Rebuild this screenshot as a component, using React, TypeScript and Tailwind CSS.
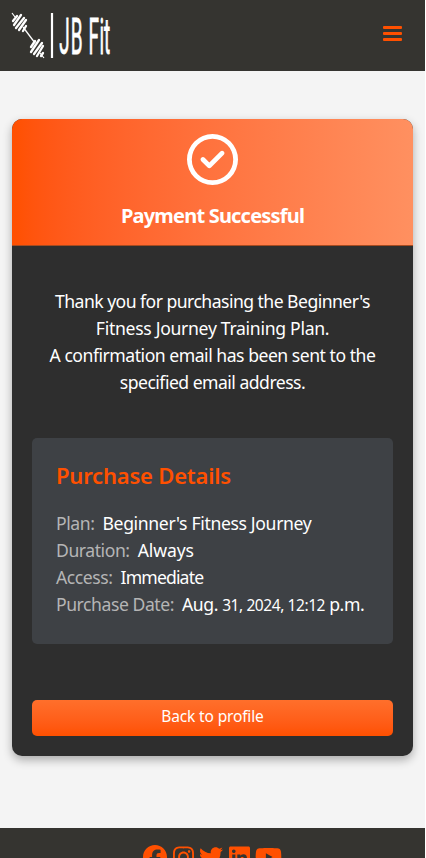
import type { ReactNode } from "react";
import { FaFacebook, FaInstagram, FaLinkedin, FaRegCircleCheck, FaTwitter, FaYoutube } from "react-icons/fa6";

function Logo() {
  return (
    <svg className="overflow-visible" width="102" height="48" viewBox="0 0 102 48" fill="none" stroke="#fff" aria-label="JB Fit">
      <path d="M12 15 24 31" strokeWidth="1.3" />
      <g strokeWidth="2.3" strokeLinecap="round">
        <path d="M2 9 6 4M3 13 10 3M5 16 13 6M8 18 15 8M12 19 15 14" />
        <path d="M20 35 24 29M20 40 28 28M23 42 31 31M26 44 32 34M30 44 32 41" />
      </g>
      <path d="M1 1 4 5M29 41 33 46" strokeWidth="1.2" />
      <path d="M41 1V46" strokeWidth="2.2" />
      <text
        transform="scale(0.38 1)"
        x="127 157 182 204 233 245"
        y="41.5"
        fill="#fff"
        strokeWidth="0.8"
        fontFamily="Roboto, sans-serif"
        fontSize="50"
        fontWeight="400"
      >
        JB Fit
      </text>
    </svg>
  );
}

function MenuIcon() {
  return (
    <svg width="19" height="15" fill="#ff5000" aria-label="Menu">
      <rect width="19" height="3" rx="1" />
      <rect y="6" width="19" height="3" rx="1" />
      <rect y="12" width="19" height="3" rx="1" />
    </svg>
  );
}

function Detail({ label, value, tracking }: { label: string; value: ReactNode; tracking: string }) {
  return (
    <p className="whitespace-nowrap">
      <span className="mr-[3.5px] tracking-[-0.45px] text-[#b5b5b5]">{label}:</span> <span className={tracking}>{value}</span>
    </p>
  );
}

export default function App() {
  return (
    <div className="flex h-[858px] w-[425px] flex-col overflow-hidden bg-[#f4f4f4] font-['Noto_Sans',sans-serif] text-white">
      <header className="flex h-[71px] shrink-0 items-center justify-between bg-[#353430] pr-[23px] pl-[11px]">
        <Logo />
        <div className="mb-1">
          <MenuIcon />
        </div>
      </header>

      <main className="px-3 pt-12 pb-[72px]">
        <section className="h-[637px] overflow-hidden rounded-[10px] bg-[#2e2e2e] shadow-[0_4px_10px_rgba(0,0,0,0.3)]">
          <div className="flex h-[127px] flex-col items-center border-b border-[#a64b20] bg-linear-to-r from-[#ff5000] to-[#ff9060] pt-[15px]">
            <FaRegCircleCheck className="size-[51px]" />
            <h1 className="mt-[17px] text-[20px] leading-[28px] font-bold tracking-[-0.8px] whitespace-nowrap">Payment Successful</h1>
          </div>

          <div className="px-5">
            <div className="pt-[42px] text-center text-[17.6px] leading-[27px] whitespace-nowrap">
              <p className="tracking-[-0.54px]">Thank you for purchasing the Beginner's</p>
              <p className="tracking-[-0.3px]">Fitness Journey Training Plan.</p>
              <p className="tracking-[-0.48px]">A confirmation email has been sent to the</p>
              <p className="tracking-[-0.52px]">specified email address.</p>
            </div>

            <div className="mt-[42px] h-[206px] rounded-[5px] bg-[#3e4145] px-6 pt-5 text-[17.6px] leading-[27px]">
              <h2 className="mb-[18px] text-[22px] leading-[34px] font-semibold tracking-[-0.2px] text-[#ff5000]">Purchase Details</h2>
              <Detail label="Plan" value="Beginner's Fitness Journey" tracking="tracking-[-0.35px]" />
              <Detail label="Duration" value="Always" tracking="tracking-[-0.1px]" />
              <Detail label="Access" value="Immediate" tracking="tracking-[-0.85px]" />
              <Detail
                label="Purchase Date"
                value={<>Aug. <span className="text-[15.5px]">31, 2024, 12:12</span> p.m.</>}
                tracking="tracking-[-0.42px]"
              />
            </div>

            <button className="mt-14 block h-9 w-full rounded-[5px] bg-linear-to-b from-[#ff6f2b] to-[#ff5000] pb-[3px] text-[15.5px] tracking-[-0.15px]">
              Back to profile
            </button>
          </div>
        </section>
      </main>

      <footer className="flex h-[60px] shrink-0 justify-center gap-[5.5px] bg-[#353430] pt-[16.5px] text-[#ff5000]">
        <FaFacebook className="size-6" />
        <FaInstagram className="h-6 w-[21px]" />
        <FaTwitter className="size-6" />
        <FaLinkedin className="h-6 w-[21px]" />
        <FaYoutube className="h-6 w-[27px]" />
      </footer>
    </div>
  );
}
